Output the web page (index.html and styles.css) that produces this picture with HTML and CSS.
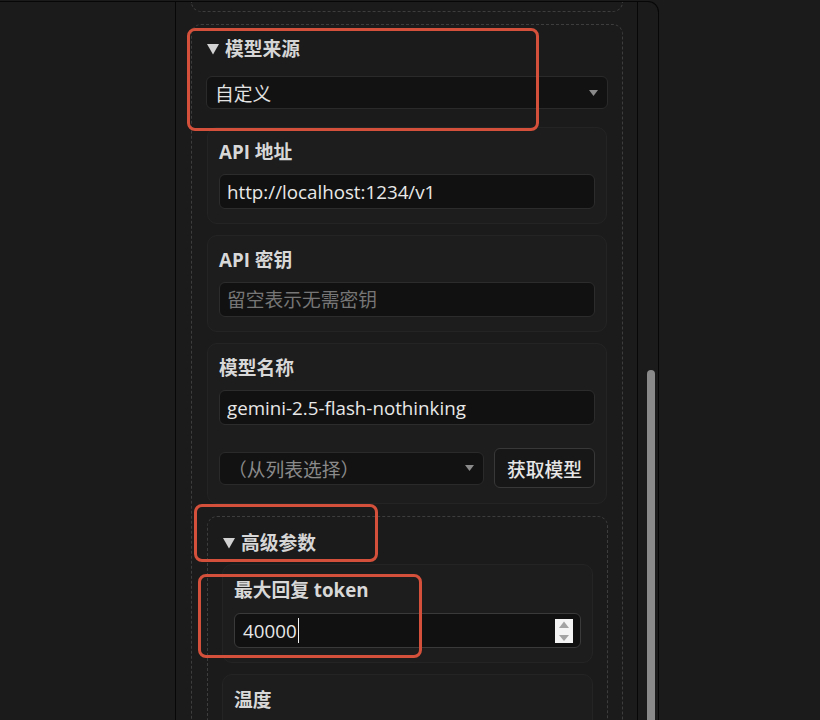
FILE: index.html
```html
<!DOCTYPE html>
<html lang="zh-CN">
<head>
<meta charset="utf-8">
<title>模型设置</title>
<link rel="stylesheet" href="styles.css">
</head>
<body>
<div class="app">
  <aside class="sidebar"></aside>
  <main class="main">
    <div class="content">
      <div class="prev-box"></div>
      <section class="group">
        <div class="summary"><svg class="tri" width="12" height="11" viewBox="0 0 12 11"><polygon points="0,0 12,0 6,10.5" fill="#d2d2d2"/></svg>模型来源</div>
        <div class="select wide"><span>自定义</span><svg class="arrow" width="9" height="6" viewBox="0 0 9 6"><polygon points="0,0 9,0 4.5,6" fill="#8a8a8a"/></svg></div>

        <div class="card">
          <div class="label">API 地址</div>
          <input class="field" type="text" value="http://localhost:1234/v1">
        </div>

        <div class="card">
          <div class="label">API 密钥</div>
          <input class="field" type="text" placeholder="留空表示无需密钥">
        </div>

        <div class="card">
          <div class="label">模型名称</div>
          <input class="field" type="text" value="gemini-2.5-flash-nothinking">
          <div class="row">
            <div class="select muted"><span>（从列表选择）</span><svg class="arrow" width="9" height="6" viewBox="0 0 9 6"><polygon points="0,0 9,0 4.5,6" fill="#8a8a8a"/></svg></div>
            <button class="btn" type="button">获取模型</button>
          </div>
        </div>

        <section class="group inner">
          <div class="summary"><svg class="tri" width="12" height="11" viewBox="0 0 12 11"><polygon points="0,0 12,0 6,10.5" fill="#d2d2d2"/></svg>高级参数</div>
          <div class="card">
            <div class="label">最大回复 token</div>
            <div class="field num">
              <span>40000</span><span class="caret"></span>
              <span class="grow"></span>
              <svg class="spin" width="18" height="24" viewBox="0 0 18 24"><rect width="18" height="24" fill="#f4f4f4"/><polygon points="4,9 14,9 9,2.5" fill="#a3a3a3"/><polygon points="4,16 14,16 9,22" fill="#a3a3a3"/></svg>
            </div>
          </div>
          <div class="card">
            <div class="label">温度</div>
            <input class="field" type="text" value="0.7">
          </div>
        </section>
      </section>
    </div>
    <div class="scrollbar"><div class="thumb"></div></div>
  </main>
</div>

<div class="mark m1"></div>
<div class="mark m2"></div>
<div class="mark m3"></div>
</body>
</html>
```

FILE: styles.css
```css
html, body {
  margin: 0;
  padding: 0;
  background: #1b1b1b;
  overflow: hidden;
  height: 100%;
}

body {
  font-family: "Open Sans", "Noto Sans CJK SC", sans-serif;
  color: #e4e4e4;
  font-size: 18.75px;
}

.app {
  display: flex;
  width: 659px;
  height: 740px;
  margin-top: 1px;
  box-sizing: border-box;
  border-top: 1px solid #070707;
  border-right: 1px solid #070707;
  border-top-right-radius: 11px;
}

.sidebar {
  width: 175px;
  flex: none;
  border-right: 1px solid #070707;
}

.main {
  flex: 1;
  display: flex;
  min-width: 0;
}

.content {
  flex: 1;
  padding: 0 14px 0 15px;
  overflow: hidden;
}

.prev-box {
  height: 9px;
  border: 1px dashed #3d3d3d;
  border-top: none;
  border-radius: 0 0 10px 10px;
  margin-bottom: 12px;
}

.group {
  border: 1px dashed #3d3d3d;
  border-radius: 10px;
  padding: 11px 14px 20px;
}

.group.inner {
  margin-left: 1px;
  margin-top: 12px;
  padding-top: 13px;
}

.summary {
  display: flex;
  align-items: center;
  font-weight: 700;
  line-height: 26px;
  color: #d6d6d6;
  margin-bottom: 14px;
}

.group.inner .summary {
  margin-bottom: 8px;
}

.tri {
  margin: 0 6px 0 1px;
  flex: none;
}

.select {
  display: flex;
  align-items: center;
  justify-content: space-between;
  height: 33px;
  box-sizing: border-box;
  background: #121212;
  border: 1px solid #2a2a2a;
  border-radius: 6px;
  padding: 0 9px 0 8px;
  color: #e2e2e2;
}

.select.wide {
  margin-bottom: 18px;
}

.select.muted {
  flex: 1;
  color: #8a8a8a;
}

.card {
  background: #1d1d1d;
  border: 1px solid #242424;
  border-radius: 10px;
  padding: 11px 11px 14px;
  margin: 0 1px 11px;
}

.card:last-of-type {
  margin-bottom: 0;
}

.group.inner .card {
  margin: 0 0 11px;
  padding-top: 12px;
}

.label {
  font-weight: 700;
  line-height: 26px;
  color: #d8d8d8;
  margin-bottom: 9px;
}

.group.inner .label {
  margin-bottom: 10px;
}

.field {
  display: block;
  width: 100%;
  height: 35px;
  box-sizing: border-box;
  background: #111111;
  border: 1px solid #2c2c2c;
  border-radius: 6px;
  padding: 0 7px;
  font-family: inherit;
  font-size: 18.75px;
  color: #e8e8e8;
  outline: none;
}

.field::placeholder {
  color: #767676;
}

.field.num {
  display: flex;
  align-items: center;
  border-color: #3a3a3a;
  padding: 0 7px 0 8px;
}

.caret {
  width: 1px;
  height: 25px;
  background: #f2f2f2;
  margin-left: 1px;
}

.grow {
  flex: 1;
}

.spin {
  flex: none;
}

.row {
  display: flex;
  align-items: center;
  gap: 10px;
  margin-top: 23px;
  margin-bottom: 1px;
}

.btn {
  height: 40px;
  width: 101px;
  box-sizing: border-box;
  background: #171717;
  border: 1px solid #383838;
  border-radius: 6px;
  font-family: inherit;
  font-size: 18.75px;
  font-weight: 500;
  color: #e6e6e6;
  padding: 0;
}

.scrollbar {
  width: 20px;
  flex: none;
  border-left: 1px solid #070707;
  padding-top: 368px;
}

.thumb {
  width: 8px;
  height: 400px;
  margin-left: 9px;
  background: #8a8a8a;
  border-radius: 4px 4px 0 0;
}

.mark {
  position: absolute;
  border: 3px solid #d4503a;
  border-radius: 8px;
  box-sizing: border-box;
}

.m1 { left: 187px; top: 28px; width: 352px; height: 103px; }
.m2 { left: 194px; top: 504px; width: 184px; height: 58px; }
.m3 { left: 198px; top: 574px; width: 224px; height: 84px; }
```
